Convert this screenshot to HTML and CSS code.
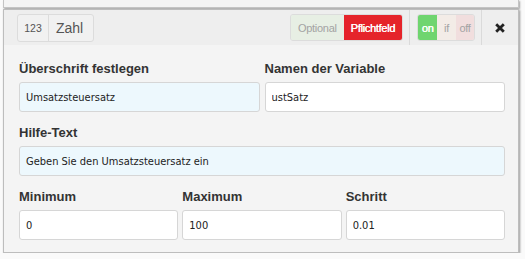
FILE: index.html
```html
<!DOCTYPE html>
<html lang="de">
<head>
    <meta charset="UTF-8">
    <title>Feld: Zahl</title>
    <link rel="stylesheet" href="styles.css">
</head>
<body>
    <div class="panel-tail"></div>
    <div class="panel">
        <div class="panel-head">
            <div class="type-badge"><span class="type-icon">123</span><span class="type-name">Zahl</span></div>
            <div class="spacer"></div>
            <div class="seg required">
                <span class="seg-item">Optional</span>
                <span class="seg-item active-red">Pflichtfeld</span>
            </div>
            <div class="divider"></div>
            <div class="seg state">
                <span class="seg-item active-green">on</span>
                <span class="seg-item if">if</span>
                <span class="seg-item off">off</span>
            </div>
            <div class="divider"></div>
            <button class="close" title="Entfernen">
                <svg width="10" height="10" viewBox="0 0 10 10"><path d="M1.2 1.2 L8.8 8.8 M8.8 1.2 L1.2 8.8" stroke="#222" stroke-width="2.8" stroke-linecap="butt"/></svg>
            </button>
        </div>
        <div class="panel-body">
            <div class="row two">
                <div class="field">
                    <label>Überschrift festlegen</label>
                    <input class="input lang" value="Umsatzsteuersatz">
                </div>
                <div class="field">
                    <label>Namen der Variable</label>
                    <input class="input" value="ustSatz">
                </div>
            </div>
            <div class="row">
                <div class="field">
                    <label>Hilfe-Text</label>
                    <input class="input lang" value="Geben Sie den Umsatzsteuersatz ein">
                </div>
            </div>
            <div class="row three">
                <div class="field">
                    <label>Minimum</label>
                    <input class="input" value="0">
                </div>
                <div class="field">
                    <label>Maximum</label>
                    <input class="input" value="100">
                </div>
                <div class="field">
                    <label>Schritt</label>
                    <input class="input" value="0.01">
                </div>
            </div>
        </div>
    </div>
</body>
</html>
```

FILE: styles.css
```css
body {
    margin: 0;
    background: #fafafa;
    font-family: "Liberation Sans", Arial, sans-serif;
    color: #333;
}

.panel-tail {
    margin: 0 6px 0 3px;
    height: 7px;
    background: #f4f4f4;
    border: 1px solid #c4c4c4;
    border-top: none;
    box-shadow: 1px 1px 2px rgba(0, 0, 0, 0.35);
}

.panel {
    margin: 1px 6px 0 3px;
    background: #f4f4f4;
    border: 1px solid #bdbdbd;
    box-shadow: 1px 1px 2px rgba(0, 0, 0, 0.4);
}

.panel-head {
    display: flex;
    align-items: center;
    height: 35px;
    padding-left: 13px;
    background: #eeeeee;
}

.spacer {
    flex: 1;
}

.type-badge {
    display: flex;
    height: 26px;
    border: 1px solid #dcdcdc;
    border-radius: 3px;
    background: #f1f1f1;
    color: #555;
}

.type-badge span {
    display: flex;
    align-items: center;
}

.type-icon {
    width: 30px;
    justify-content: center;
    font-size: 10.5px;
    border-right: 1px solid #dcdcdc;
}

.type-name {
    padding: 0 10px 0 7px;
    font-size: 14px;
}

.seg {
    display: flex;
    height: 25px;
    border: 1px solid #dcdcdc;
    border-radius: 3px;
    overflow: hidden;
    font-size: 11px;
    letter-spacing: -0.3px;
    color: #a3a3a3;
}

.seg-item {
    display: flex;
    align-items: center;
    justify-content: center;
}

.required .seg-item {
    padding: 0 7px;
    background: #e7efe4;
}

.required .active-red {
    background: #e5242a;
    color: #fff;
    text-shadow: 0.4px 0 0 #fff;
}

.divider {
    align-self: stretch;
    width: 1px;
    margin: 0 7px 0 6px;
    background: #dadada;
}

.divider:last-of-type {
    margin-right: 0;
}

.state .seg-item {
    width: 19px;
}

.state .active-green {
    background: #6fd56f;
    color: #fff;
    text-shadow: 0.4px 0 0 #fff;
}

.state .if {
    background: #f3ece7;
}

.state .off {
    width: 18px;
    background: #f1dede;
}

.close {
    width: 36px;
    height: 35px;
    padding: 0;
    border: none;
    background: none;
    display: flex;
    align-items: center;
    justify-content: center;
}

.panel-body {
    padding: 16px 13px 12px 15px;
}

.row {
    display: grid;
    gap: 5px;
    margin-bottom: 13px;
}

.row:last-child {
    margin-bottom: 0;
}

.row.two {
    grid-template-columns: 1fr 1fr;
}

.row.three {
    grid-template-columns: 1fr 1fr 1fr;
    gap: 4px;
}

.field label {
    display: block;
    font-size: 13px;
    font-weight: bold;
    line-height: 16px;
    margin-bottom: 5px;
    color: #333;
}

.input {
    display: block;
    box-sizing: border-box;
    width: 100%;
    height: 30px;
    padding: 0 6px;
    border: 1px solid #d6d6d6;
    border-radius: 3px;
    background: #fff;
    font-family: "DejaVu Sans Condensed", "DejaVu Sans", sans-serif;
    font-stretch: condensed;
    font-size: 11px;
    color: #222;
}

.input.lang {
    background: #edf8fd;
}
```
